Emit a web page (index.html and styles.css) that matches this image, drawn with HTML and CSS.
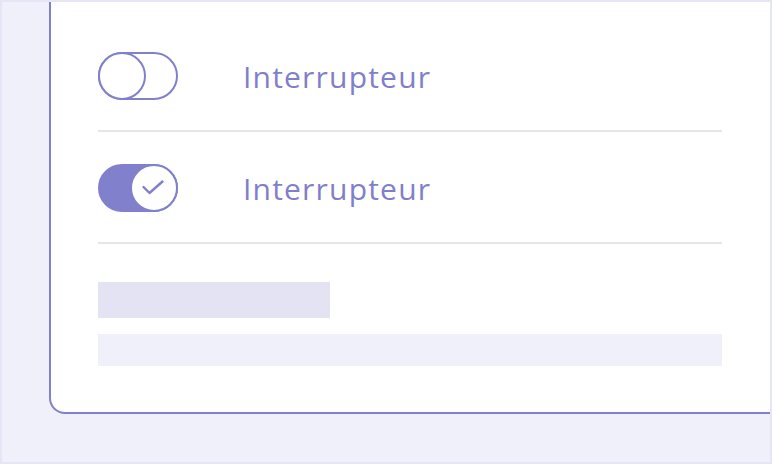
FILE: index.html
```html
<!DOCTYPE html>
<html lang="fr">
<head>
<meta charset="utf-8">
<link rel="stylesheet" href="styles.css">
</head>
<body>
<div class="frame">
  <div class="card">
    <div class="row">
      <span class="toggle toggle-off"><span class="knob"></span></span>
      <span class="label">Interrupteur</span>
    </div>
    <div class="row">
      <span class="toggle toggle-on">
        <span class="knob">
          <svg width="22" height="15" viewBox="0 0 22 15"><path d="M1.5 7 L7.5 13 L20.5 1.5" fill="none" stroke="#8080cc" stroke-width="2.4" stroke-linecap="round" stroke-linejoin="round"/></svg>
        </span>
      </span>
      <span class="label">Interrupteur</span>
    </div>
    <div class="skeleton">
      <div class="bar bar-short"></div>
      <div class="bar bar-long"></div>
    </div>
  </div>
</div>
</body>
</html>
```
FILE: styles.css
```css
* { box-sizing: border-box; }
body { margin: 0; }
.frame {
  width: 772px;
  height: 464px;
  border: 2px solid #e6e5f5;
  background: #f0f0fa;
  padding-left: 47px;
  overflow: hidden;
}
.card {
  width: 721px;
  height: 412px;
  background: #fff;
  border-left: 2px solid #8080cc;
  border-bottom: 2px solid #8080cc;
  border-bottom-left-radius: 16px;
  padding: 18px 0 0 47px;
}
.row {
  width: 624px;
  height: 112px;
  padding-top: 32px;
  display: flex;
  align-items: flex-start;
  border-bottom: 2px solid #e6e6e6;
}
.toggle {
  position: relative;
  width: 80px;
  height: 48px;
  border-radius: 24px;
  border: 2px solid #8080cc;
  flex-shrink: 0;
}
.toggle-on { background: #8080cc; }
.knob {
  position: absolute;
  top: -2px;
  width: 48px;
  height: 48px;
  border-radius: 50%;
  border: 2px solid #8080cc;
  background: #fff;
  display: flex;
  align-items: center;
  justify-content: center;
}
.toggle-off .knob { left: -2px; }
.toggle-on .knob { right: -2px; }
.toggle-on .knob svg { margin-left: -2px; margin-top: -1px; }
.label {
  margin-left: 65px;
  margin-top: 5px;
  font-family: "Open Sans", sans-serif;
  font-size: 30px;
  line-height: 40px;
  color: #7f7fcc;
  letter-spacing: 1.2px;
}
.skeleton {
  padding-top: 38px;
  display: flex;
  flex-direction: column;
  gap: 16px;
}
.bar-short { width: 232px; height: 36px; background: #e4e3f4; }
.bar-long { width: 624px; height: 32px; background: #f0f0fa; }
```
